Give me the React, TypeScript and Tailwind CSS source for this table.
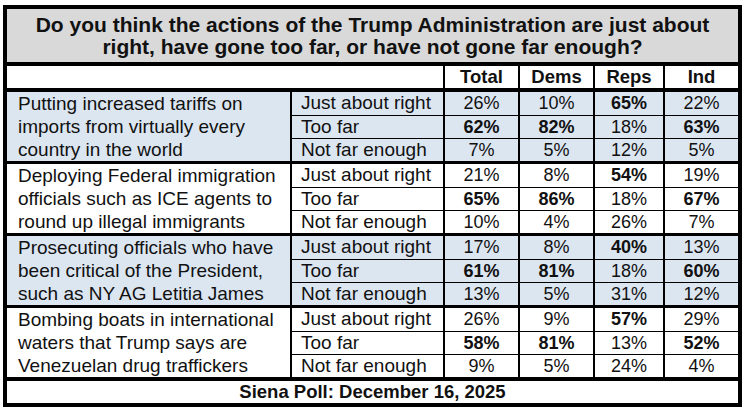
const groups = [
  {
    topic: ['Putting increased tariffs on', 'imports from virtually every', 'country in the world'],
    blue: true,
    rows: [
      { label: 'Just about right', vals: ['26%', '10%', '65%', '22%'], bold: [false, false, true, false] },
      { label: 'Too far', vals: ['62%', '82%', '18%', '63%'], bold: [true, true, false, true] },
      { label: 'Not far enough', vals: ['7%', '5%', '12%', '5%'], bold: [false, false, false, false] },
    ],
  },
  {
    topic: ['Deploying Federal immigration', 'officials such as ICE agents to', 'round up illegal immigrants'],
    blue: false,
    rows: [
      { label: 'Just about right', vals: ['21%', '8%', '54%', '19%'], bold: [false, false, true, false] },
      { label: 'Too far', vals: ['65%', '86%', '18%', '67%'], bold: [true, true, false, true] },
      { label: 'Not far enough', vals: ['10%', '4%', '26%', '7%'], bold: [false, false, false, false] },
    ],
  },
  {
    topic: ['Prosecuting officials who have', 'been critical of the President,', 'such as NY AG Letitia James'],
    blue: true,
    rows: [
      { label: 'Just about right', vals: ['17%', '8%', '40%', '13%'], bold: [false, false, true, false] },
      { label: 'Too far', vals: ['61%', '81%', '18%', '60%'], bold: [true, true, false, true] },
      { label: 'Not far enough', vals: ['13%', '5%', '31%', '12%'], bold: [false, false, false, false] },
    ],
  },
  {
    topic: ['Bombing boats in international', 'waters that Trump says are', 'Venezuelan drug traffickers'],
    blue: false,
    rows: [
      { label: 'Just about right', vals: ['26%', '9%', '57%', '29%'], bold: [false, false, true, false] },
      { label: 'Too far', vals: ['58%', '81%', '13%', '52%'], bold: [true, true, false, true] },
      { label: 'Not far enough', vals: ['9%', '5%', '24%', '4%'], bold: [false, false, false, false] },
    ],
  },
]

const headers = ['Total', 'Dems', 'Reps', 'Ind']

export default function App() {
  return (
    <div className="min-h-screen bg-white pl-[3px] pt-[5px] font-['Liberation_Sans',Arial,sans-serif] text-[#111]">
      <div className="flex w-[739px] flex-col bg-black p-[4px]">
        {/* title */}
        <div className="flex h-[53px] flex-col items-center justify-center bg-[#d9d9d9] text-[21px] font-bold leading-[22px]">
          <div>Do you think the actions of the Trump Administration are just about</div>
          <div>right, have gone too far, or have not gone far enough?</div>
        </div>

        {/* column headers */}
        <div className="mt-[4px] grid h-[22px] grid-cols-[283px_151px_73px_73px_68px_73px] gap-x-[2px]">
          <div className="col-span-2 bg-white" />
          {headers.map((h) => (
            <div key={h} className="bg-white text-center text-[18.5px] font-bold leading-[22px]">
              {h}
            </div>
          ))}
        </div>

        {/* question groups */}
        <div className="mt-[4px] flex flex-col gap-y-[3px]">
          {groups.map((g, gi) => {
            const bg = g.blue ? 'bg-[#dce6f1]' : 'bg-white'
            return (
              <div
                key={gi}
                className="grid grid-cols-[283px_151px_73px_73px_68px_73px] grid-rows-[23px_22px_22px] gap-x-[2px] gap-y-[1px]"
              >
                <div className={`row-span-3 pl-[11px] text-[19px] leading-[23px] ${bg}`}>
                  {g.topic.map((line) => (
                    <div key={line} className="whitespace-nowrap">{line}</div>
                  ))}
                </div>
                {g.rows.map((r, ri) => (
                  <div key={ri} className="contents">
                    <div className={`pl-[9px] text-[19px] leading-[22px] whitespace-nowrap ${bg}`}>{r.label}</div>
                    {r.vals.map((v, vi) => (
                      <div
                        key={vi}
                        className={`text-center text-[18px] leading-[22px] ${bg} ${r.bold[vi] ? 'font-bold' : ''}`}
                      >
                        {v}
                      </div>
                    ))}
                  </div>
                ))}
              </div>
            )
          })}
        </div>

        {/* footer */}
        <div className="mt-[4px] h-[22px] bg-white text-center text-[18.5px] font-bold leading-[22px]">
          Siena Poll: December 16, 2025
        </div>
      </div>
    </div>
  )
}
